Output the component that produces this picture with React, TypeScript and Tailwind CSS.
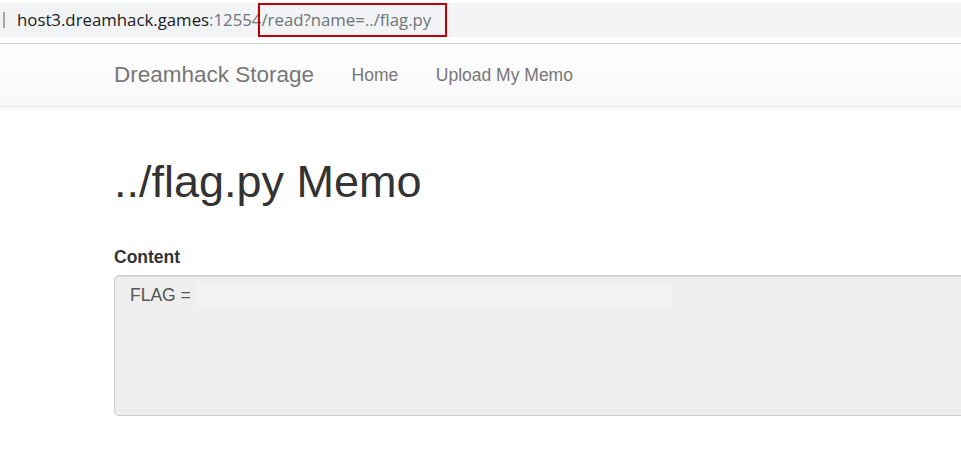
export default function App() {
  return (
    <div className="w-[961px] h-[460px] overflow-hidden bg-white font-['Liberation_Sans',Arial,sans-serif]">
      <div className="h-[3px] bg-white" />
      <div className="relative h-[34px] bg-[#f1f3f4] flex items-center">
        <div className="ml-[3px] w-[2px] h-[16px] bg-[#a6a6a6]" />
        <div className="ml-[12px] text-[16.8px] font-['Open_Sans',sans-serif] whitespace-nowrap">
          <span className="text-[#202124]">host3.dreamhack.games</span>
          <span className="text-[#70757a]">:12554/read?name=../flag.py</span>
        </div>
        <div className="absolute left-[258px] top-0 w-[189px] h-[34px] border-2 border-[#c00000]" />
      </div>
      <div className="h-[6px] bg-white" />
      <div className="h-px bg-[#dadce0]" />
      <div className="h-[63px] border-b border-[#e7e7e7] bg-gradient-to-b from-white to-[#f8f8f8] shadow-[0_1px_5px_rgba(0,0,0,0.075)]">
        <div className="pl-[114px] flex items-center h-full text-[#777] whitespace-nowrap">
          <span className="text-[22.5px] pr-[18.75px]">Dreamhack Storage</span>
          <span className="text-[17.5px] px-[18.75px]">Home</span>
          <span className="text-[17.5px] px-[18.75px]">Upload My Memo</span>
        </div>
      </div>
      <div className="pl-[114px]">
        <h1 className="mt-[50px] text-[45px] leading-[49.5px] text-[#333] font-normal whitespace-nowrap">
          ../flag.py Memo
        </h1>
        <div className="mt-[38px] font-bold text-[17.5px] leading-[25px] text-[#333]">Content</div>
        <div className="mt-[5px] w-[880px] h-[141px] bg-[#eee] border border-[#ccc] rounded-[5px] px-[15px] py-[7.5px] text-[17.5px] leading-[25px] text-[#555] whitespace-nowrap shadow-[inset_0_1px_1px_rgba(0,0,0,0.075)]">
          FLAG = <span className="inline-block align-top bg-[#f2f2f2] w-[476px] h-[25px]" />
        </div>
      </div>
    </div>
  );
}
